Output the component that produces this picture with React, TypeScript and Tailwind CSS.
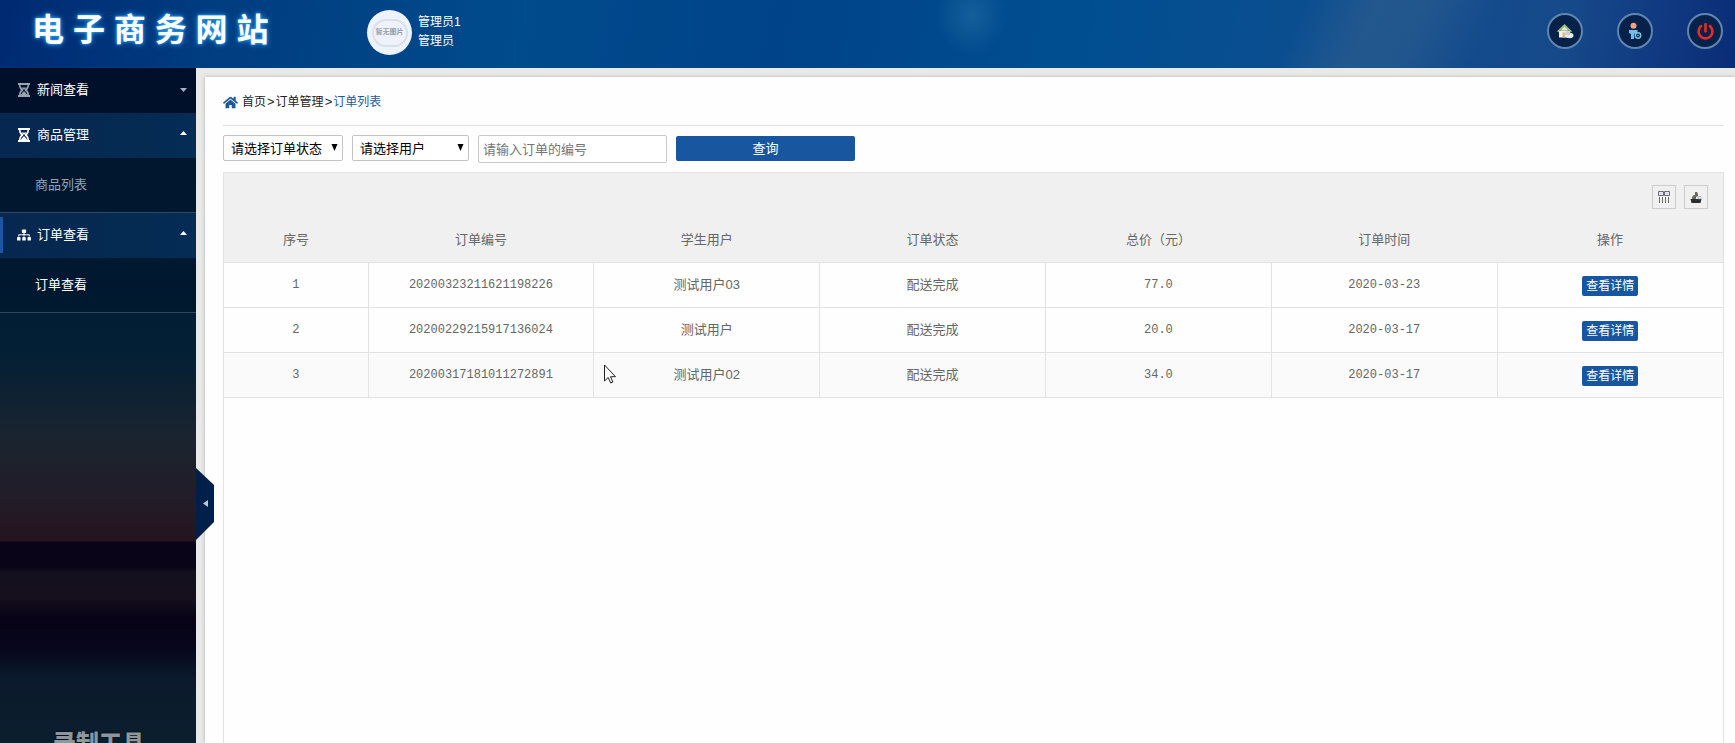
import React, { useState } from 'react';
import { FaHome, FaSitemap, FaPowerOff } from 'react-icons/fa';

interface Order {
  no: string;
  user: string;
  status: string;
  price: string;
  date: string;
}

const ORDERS: Order[] = [
  { no: '20200323211621198226', user: '测试用户03', status: '配送完成', price: '77.0', date: '2020-03-23' },
  { no: '20200229215917136024', user: '测试用户', status: '配送完成', price: '20.0', date: '2020-03-17' },
  { no: '20200317181011272891', user: '测试用户02', status: '配送完成', price: '34.0', date: '2020-03-17' },
];

const COLUMNS = ['序号', '订单编号', '学生用户', '订单状态', '总价（元）', '订单时间', '操作'];

// --- Icons ---
const HourglassIcon: React.FC<{ className?: string }> = ({ className }) => (
  <svg className={className} width="12" height="14" viewBox="0 0 12 14" fill="currentColor" aria-hidden="true">
    <path d="M0 0h12v2H0zM0 12h12v2H0z" />
    <path d="M1 2h1.600c0 2 1 3.400 2.400 4v2c-1.400.6-2.400 2-2.400 4H1c0-2.400.9-4 2.200-5C1.900 6 1 4.400 1 2zM11 2H9.400c0 2-1 3.400-2.400 4v2c1.400.6 2.400 2 2.400 4H11c0-2.400-.9-4-2.200-5C10.100 6 11 4.400 11 2z" />
    <path d="M2.500 12 6 8l3.500 4zM3.500 4.500h5L6 7z" />
  </svg>
);

const Caret: React.FC<{ up?: boolean }> = ({ up }) => (
  <svg width="7" height="4" viewBox="0 0 7 4" fill="currentColor" aria-hidden="true">
    <path d={up ? 'M0 4 3.500 0 7 4z' : 'M0 0h7L3.500 4z'} />
  </svg>
);

const HouseColorIcon = () => (
  <svg width="18" height="18" viewBox="0 0 18 18" aria-hidden="true">
    <path d="M3 9h11v6.500H3z" fill="#f4f1e4" />
    <path d="M8.500 2 1 9.300l1.200 1L8.500 4.800l6.300 5.500 1.200-1z" fill="#9cc274" />
    <path d="M8.500 4.500 4 8.800h9z" fill="#e9edd2" />
    <path d="M6.500 10.500h3v5h-3z" fill="#d9bb86" />
    <ellipse cx="13.500" cy="13.500" rx="4" ry="2.700" fill="#e7e9ec" />
    <circle cx="12" cy="11" r="2.300" fill="#c9ccd0" />
  </svg>
);

const UserColorIcon = () => (
  <svg width="18" height="18" viewBox="0 0 18 18" aria-hidden="true">
    <circle cx="7.500" cy="3.800" r="3" fill="#f2a37d" />
    <path d="M3 8h8.500v3L8 12v5H5v-5L3 11z" fill="#6cc0ea" />
    <circle cx="12" cy="13.500" r="2.700" fill="#0b2747" stroke="#7fc4e6" strokeWidth="1.500" />
    <circle cx="12" cy="13.500" r="0.800" fill="#7fc4e6" />
  </svg>
);

const ColumnsIcon = () => (
  <svg width="12" height="12" viewBox="0 0 12 12" fill="none" stroke="#6b6b6b" aria-hidden="true">
    <path d="M0.500 0.500h5v4h-5zM6.500 0.500h5v4h-5z" fill="#e2e6f2" />
    <path d="M1.500 6v6M4.500 6v6M7.500 6v6M10.500 6v6" />
  </svg>
);

const ExportIcon = () => (
  <svg width="12" height="12" viewBox="0 0 12 12" aria-hidden="true">
    <path d="M0.500 8h11L10.500 12h-9z" fill="#2e2e2e" />
    <path d="M2 8c0-3 1-4 3-4V1h2l1 2v2L6 6v2z" fill="#6a675e" />
    <path d="M8 5.500h3V8H8z" fill="#dfe6ef" stroke="#8b97a6" strokeWidth="0.500" />
  </svg>
);

// --- Header ---
const RoundButton: React.FC<{ label: string; children: React.ReactNode }> = ({ label, children }) => (
  <button
    aria-label={label}
    className="flex size-9 items-center justify-center rounded-full border-2 border-[#5f86b0] bg-[#06224a]"
  >
    {children}
  </button>
);

const Header = () => (
  <header className="flex h-[68px] shrink-0 items-start bg-[radial-gradient(ellipse_36px_40px_at_56%_22%,#2a74ac80,transparent),linear-gradient(115deg,transparent_74%,#3e658c70_78%,#3e658c60_81%,transparent_85%),linear-gradient(100deg,#002a72,#003c80_12%,#004b8c_30%,#004388_45%,#004e90_62%,#0c4e90_76%,#16498a_90%,#0b2c78)] pr-3">
    <h1 className="w-[367px] pt-px pl-8 text-[32px] leading-[58px] font-bold whitespace-nowrap text-white [text-shadow:0_0_3px_#3fb4ff,0_0_6px_#1f8fe8]">
      电 子 商 务 网 站
    </h1>
    <div className="mt-[10px] flex size-[45px] items-center justify-center rounded-full bg-[#eef2fa]">
      <div className="flex h-7 w-9 items-center justify-center rounded-full border-2 border-[#dadfe8]">
        <span className="text-[7px] font-bold whitespace-nowrap text-[#9b9ea6]">暂无图片</span>
      </div>
    </div>
    <div className="mt-[13px] ml-[6px] text-[12px] leading-[19px] text-white">
      <div>管理员1</div>
      <div>管理员</div>
    </div>
    <div className="mt-[13px] ml-auto flex gap-[34px]">
      <RoundButton label="首页">
        <HouseColorIcon />
      </RoundButton>
      <RoundButton label="个人信息">
        <UserColorIcon />
      </RoundButton>
      <RoundButton label="退出">
        <FaPowerOff size={17} className="text-[#e22b2b]" />
      </RoundButton>
    </div>
  </header>
);

// --- Sidebar ---
interface MenuGroupProps {
  title: string;
  icon: React.ReactNode;
  initialOpen?: boolean;
  current?: boolean;
  child: string;
}

const MenuGroup: React.FC<MenuGroupProps> = ({ title, icon, initialOpen = false, current = false, child }) => {
  const [open, setOpen] = useState(initialOpen);

  return (
    <li>
      <button
        onClick={() => setOpen(!open)}
        aria-expanded={open}
        className={`flex h-[45px] w-full items-center pr-[9px] pb-px text-[13px] text-white ${
          open ? 'bg-linear-to-r from-[#062750] to-[#042c54]' : 'bg-[#000f2a]'
        }`}
      >
        <span className={`h-9 w-[3px] ${current ? 'bg-[#1857a5]' : ''}`} />
        <span className={`ml-[14px] flex w-5 ${open ? 'text-white' : 'text-[#9aa3b1]'}`}>{icon}</span>
        {title}
        <span className={`ml-auto ${open ? 'mb-1 text-white' : 'text-[#9fb4c9]'}`}>
          <Caret up={open} />
        </span>
      </button>
      {open && (
        <a
          href="#"
          className={`flex h-[55px] items-center border-b border-[#2c4a60] bg-[#00152c]/60 pb-px pl-[35px] text-[13px] ${
            current ? 'text-white' : 'text-[#8fa6ba]'
          }`}
        >
          {child}
        </a>
      )}
    </li>
  );
};

const Sidebar = () => (
  <nav className="relative w-[196px] shrink-0 overflow-hidden bg-[linear-gradient(180deg,#00142f,#021c38_150px,#021f35_280px,#1a242f_370px,#221d29_430px,#25141f_473px,#090417_474px,#090417_500px,#15101d_504px,#150f1e_530px,#080316_550px,#07061c_580px,#0a1a2c_610px,#0b1e2e)]">
    <ul>
      <MenuGroup title="新闻查看" icon={<HourglassIcon className="ml-px" />} child="新闻列表" />
      <MenuGroup title="商品管理" icon={<HourglassIcon className="ml-px" />} child="商品列表" initialOpen />
      <MenuGroup title="订单查看" icon={<FaSitemap size={14} />} child="订单查看" initialOpen current />
    </ul>
    <div className="absolute inset-x-0 bottom-0 h-3 overflow-hidden pl-[53px] text-[23px] leading-6 font-black text-[#8d959d] [text-shadow:0_0_2px_#000]">
      录制工具
    </div>
  </nav>
);

// --- Filters ---
const FilterSelect: React.FC<{ label: string; className: string }> = ({ label, className }) => (
  <div className={`relative ${className}`}>
    <select
      aria-label={label}
      className="h-[26px] w-full appearance-none rounded-xs border border-[#c3c3c3] bg-white pt-0.5 pl-[7px] text-[13px] text-black"
    >
      <option>{label}</option>
    </select>
    <svg
      className="pointer-events-none absolute top-[9px] right-[5px]"
      width="7"
      height="7"
      viewBox="0 0 7 7"
      aria-hidden="true"
    >
      <path d="M0.500 0h6L3.500 7z" fill="#000" />
    </svg>
  </div>
);

// --- Table ---
const OrderTable = () => (
  <section className="flex-1 border border-b-0 border-[#e2e4e2]">
    <div className="flex h-[45px] items-end justify-end gap-2 bg-[#f0f0f0] pr-[15px] pb-[9px]">
      <button aria-label="筛选列" className="flex size-6 items-center justify-center border border-[#cccccc]">
        <ColumnsIcon />
      </button>
      <button aria-label="导出" className="flex size-6 items-center justify-center border border-[#cccccc]">
        <ExportIcon />
      </button>
    </div>
    <table className="w-full table-fixed border-collapse text-center text-[13px] text-[#666]">
      <thead className="bg-[#f0f0f0]">
        <tr className="h-11 border-b border-[#e2e4e2]">
          {COLUMNS.map((name, i) => (
            <th key={name} className={`font-normal ${i === 0 ? 'w-36' : ''}`}>
              {name}
            </th>
          ))}
        </tr>
      </thead>
      <tbody className="[&_td]:border-r [&_td]:border-[#e2e4e2] [&_td:last-child]:border-r-0">
        {ORDERS.map((o, i) => (
          <tr key={o.no} className={`h-[45px] border-b border-[#e2e4e2] ${i === 2 ? 'bg-[#f9faf9]' : ''}`}>
            <td className="font-[Liberation_Mono,monospace] text-[12px]">{i + 1}</td>
            <td className="font-[Liberation_Mono,monospace] text-[12px]">{o.no}</td>
            <td>{o.user}</td>
            <td>{o.status}</td>
            <td className="font-[Liberation_Mono,monospace] text-[12px]">{o.price}</td>
            <td className="font-[Liberation_Mono,monospace] text-[12px]">{o.date}</td>
            <td>
              <button className="mt-0.5 h-5 rounded-xs bg-[#1857a0] px-1 align-middle text-[12px] leading-5 text-white">
                查看详情
              </button>
            </td>
          </tr>
        ))}
      </tbody>
    </table>
  </section>
);

const App: React.FC = () => {
  const [keyword, setKeyword] = useState('');

  return (
    <div className="relative flex min-h-screen flex-col font-[Liberation_Sans,Noto_Sans_CJK_SC,sans-serif]">
      <Header />
      <div className="relative flex flex-1">
        <Sidebar />
        <div className="flex min-w-0 flex-1 bg-[#e9e9e7] pt-[9px] pl-[9px]">
          <main className="flex min-w-0 flex-1 flex-col bg-[#fdfefd] pr-[11px] pl-[18px] shadow-[0_0_4px_#b4b4b4]">
            <div className="flex h-[49px] items-center border-b border-[#dfe3df] pt-0.5 text-[12px] text-[#222]">
              <FaHome size={15} className="mr-1 text-[#1f5a9e]" />
              <a href="#">首页</a>
              <span className="px-px text-[13px]">&gt;</span>
              <a href="#">订单管理</a>
              <span className="px-px text-[13px]">&gt;</span>
              <a href="#" className="text-[#1f5a9e]">
                订单列表
              </a>
            </div>
            <form className="flex items-start gap-[9px] py-[9px]" onSubmit={(e) => e.preventDefault()}>
              <FilterSelect label="请选择订单状态" className="w-[120px]" />
              <FilterSelect label="请选择用户" className="w-[117px]" />
              <input
                type="text"
                aria-label="订单编号"
                placeholder="请输入订单的编号"
                value={keyword}
                onChange={(e) => setKeyword(e.target.value)}
                className="h-7 w-[189px] rounded-xs border border-[#c9c9c9] bg-white px-1 text-[13px] placeholder:text-[#757575]"
              />
              <button type="submit" className="mt-px h-[25px] w-[179px] rounded-xs bg-[#1857a0] text-[13px] text-white">
                查询
              </button>
            </form>
            <OrderTable />
          </main>
        </div>
        <button aria-label="收起菜单" className="absolute top-[400px] left-[196px]">
          <svg width="18" height="72" viewBox="0 0 18 72" aria-hidden="true">
            <path d="M0 0 18 17V54L0 72z" fill="#00204a" />
            <path d="M12 32v7l-5-3.500z" fill="#b9c9da" />
          </svg>
        </button>
      </div>
      {/* mouse pointer */}
      <svg
        className="pointer-events-none absolute top-[364px] left-[604px]"
        width="12"
        height="20"
        viewBox="0 0 12 20"
        aria-hidden="true"
      >
        <path d="M0.500 1v16l3.700-3.500 2.500 5.500 2.200-1-2.400-5.300h5z" fill="#fff" stroke="#222" />
      </svg>
    </div>
  );
};

export default App;
